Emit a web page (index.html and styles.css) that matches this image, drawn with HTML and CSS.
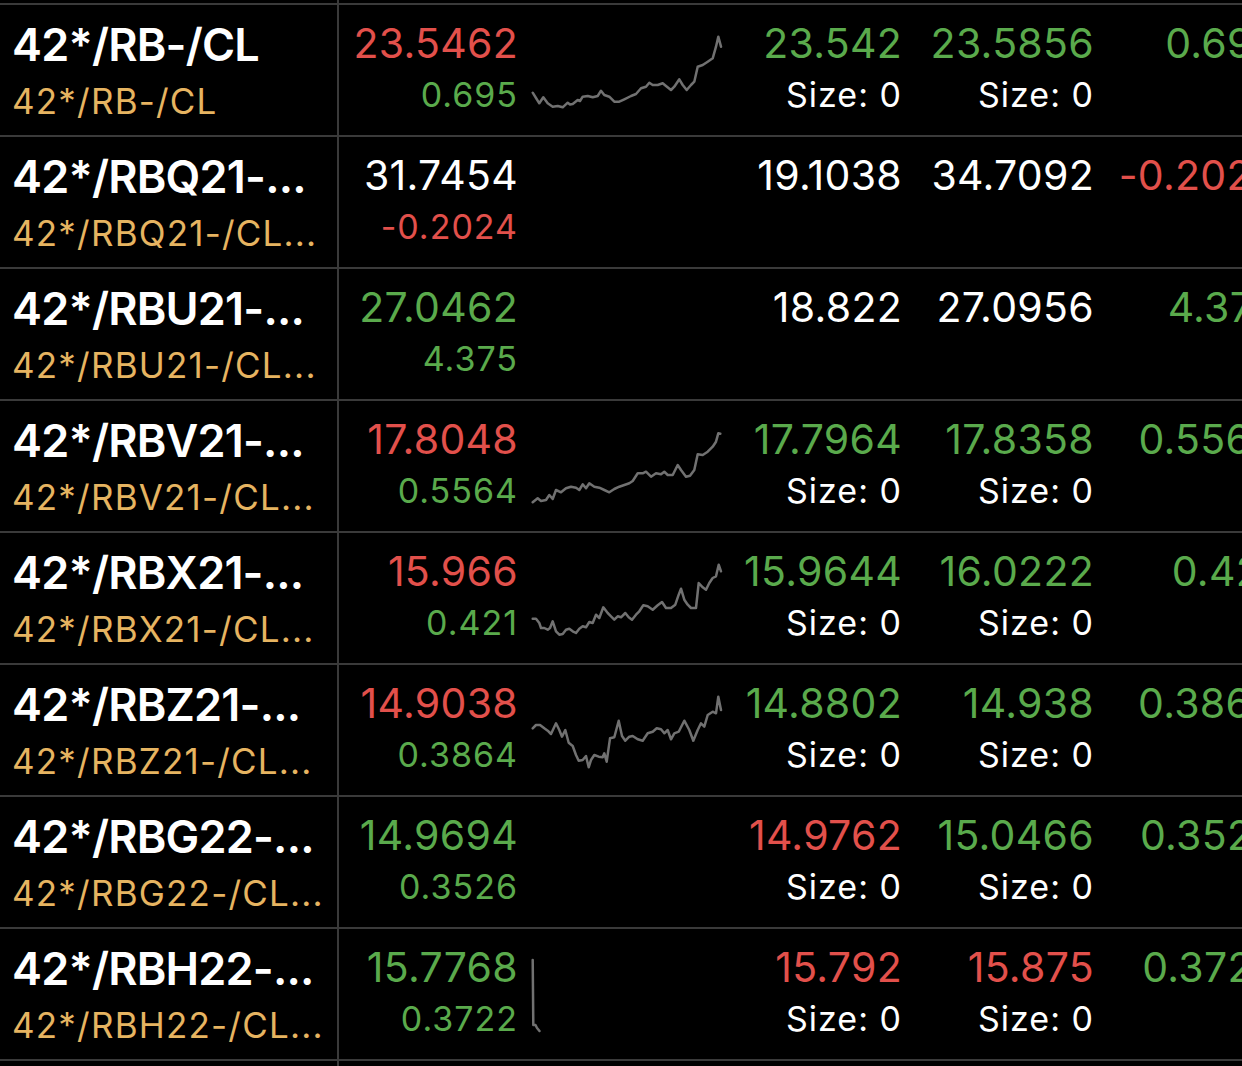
FILE: index.html
```html
<!DOCTYPE html>
<html>
<head>
<meta charset="utf-8">
<link rel="stylesheet" href="styles.css">
</head>
<body>
<div class="list">
  <div class="row partial"><div class="name"></div></div>

  <div class="row">
    <div class="name"><div class="sym">42*/RB-/CL</div><div class="desc">42*/RB-/CL</div></div>
    <div class="cell"><div class="big r">23.5462</div><div class="small g">0.695</div></div>
    <div class="spark"><svg viewBox="5 -15 192 130"><polyline points="6.7,72.7 10,78 13.3,83.3 17.3,77.3 21.7,83.3 26.7,86.7 31.7,86 36.7,87.3 41.7,82.7 44,84.5 46.7,84 51.7,80 54,81 56.7,76.7 61.7,76 66.7,77.3 71.7,76 75,70.7 78.3,75 83.3,76.7 88.3,81.7 93.3,81.7 98.3,79.3 105,76 110,74 115,68.3 120,66.7 123.3,62.7 126.7,65 131.7,65 136.7,63.3 140,66 145,70 148.3,66.7 153.3,59.3 156.7,65 160.7,70 165,65 168.3,61.7 171.7,46.7 176.7,45 181.7,41.7 186.7,38.3 190,26.7 192.3,16.7 195,26.7"/></svg></div>
    <div class="cell"><div class="big g">23.542</div><div class="small w">Size: 0</div></div>
    <div class="cell"><div class="big g">23.5856</div><div class="small w">Size: 0</div></div>
    <div class="cell last"><div class="big g">0.695</div></div>
  </div>

  <div class="row">
    <div class="name"><div class="sym">42*/RBQ21-...</div><div class="desc">42*/RBQ21-/CL...</div></div>
    <div class="cell"><div class="big w">31.7454</div><div class="small r">-0.2024</div></div>
    <div class="spark"></div>
    <div class="cell"><div class="big w">19.1038</div></div>
    <div class="cell"><div class="big w">34.7092</div></div>
    <div class="cell last"><div class="big r">-0.2024</div></div>
  </div>

  <div class="row">
    <div class="name"><div class="sym">42*/RBU21-...</div><div class="desc">42*/RBU21-/CL...</div></div>
    <div class="cell"><div class="big g">27.0462</div><div class="small g">4.375</div></div>
    <div class="spark"></div>
    <div class="cell"><div class="big w">18.822</div></div>
    <div class="cell"><div class="big w">27.0956</div></div>
    <div class="cell last"><div class="big g">4.375</div></div>
  </div>

  <div class="row">
    <div class="name"><div class="sym">42*/RBV21-...</div><div class="desc">42*/RBV21-/CL...</div></div>
    <div class="cell"><div class="big r">17.8048</div><div class="small g">0.5564</div></div>
    <div class="spark"><svg viewBox="5 -14 192 130"><polyline points="6.7,87.3 11.7,83.3 15,86 20,85 23.3,80 26.7,84 30,75 35,77.3 40,73.3 45,71.7 50,72.7 53.3,75 56.7,69.3 60,73.3 63.3,68.3 68.3,71.7 73.3,72.7 78.3,75 83.3,77.3 88.3,74 93.3,71.7 98.3,70 103.3,68.3 106.7,66 111.7,58.3 116.7,58.3 120,56.7 125,61.7 130,58.3 135,59.3 138.3,56.7 141.7,60 146.7,60 151.7,50 155,55 160,61.7 164,60.7 168.3,55 171.7,39.3 176.7,40 181.7,36.7 186.7,31.7 190,26.7 192.3,18.3 194.3,18.7"/></svg></div>
    <div class="cell"><div class="big g">17.7964</div><div class="small w">Size: 0</div></div>
    <div class="cell"><div class="big g">17.8358</div><div class="small w">Size: 0</div></div>
    <div class="cell last"><div class="big g">0.5564</div></div>
  </div>

  <div class="row">
    <div class="name"><div class="sym">42*/RBX21-...</div><div class="desc">42*/RBX21-/CL...</div></div>
    <div class="cell"><div class="big r">15.966</div><div class="small g">0.421</div></div>
    <div class="spark"><svg viewBox="5 -15 192 130"><polyline points="6.7,70.7 10,70.7 13.3,75 15,80 18.3,80 21.7,81.7 24,80 26.7,73.3 30,83.3 33.3,86.7 36.7,86 40,81.7 43.3,80.7 46.7,83.3 50,85 53.3,80.7 56.7,78.3 60,79.3 63.3,74 66.7,75 70,66.7 73.3,70 77.3,59.3 81.7,65 85,68.3 88.3,71.7 91.7,68.3 95,69.3 99.3,65 102.7,69.3 106,71.7 110,66.7 113.3,63.3 117.3,57.3 121.7,58.3 126.7,61.7 131.7,57.3 136,54 140,60 145,60 149.3,56.7 152.7,46.7 155,40.7 158.3,51.7 161.7,56.7 165,60 170,60 172.7,35 176.7,39.3 180,41.7 183.3,35 186.7,30 190,28.3 192.7,16.7 195,23.3"/></svg></div>
    <div class="cell"><div class="big g">15.9644</div><div class="small w">Size: 0</div></div>
    <div class="cell"><div class="big g">16.0222</div><div class="small w">Size: 0</div></div>
    <div class="cell last"><div class="big g">0.421</div></div>
  </div>

  <div class="row">
    <div class="name"><div class="sym">42*/RBZ21-...</div><div class="desc">42*/RBZ21-/CL...</div></div>
    <div class="cell"><div class="big r">14.9038</div><div class="small g">0.3864</div></div>
    <div class="spark"><svg viewBox="5 -15 192 130"><polyline points="6.7,48.3 10,45 14,45 18.3,48.3 21.7,50.7 25,54 30,43.3 33.3,50 36,56.7 39.3,50 42.7,62.7 46.7,66 50,75 52.7,80.7 56.7,80 60,76 62.7,87.3 65,80 68.3,75 72.7,76.7 76.7,77.3 78.3,73.3 80.7,81.7 84,58.3 88.3,57.3 92.7,40.7 96,56 99.3,60.7 103.3,56.7 106.7,56 111.7,59.3 116.7,60.7 121.7,53.3 126.7,51.7 130.7,48.3 135,49.3 138.3,53.3 141.7,50 145,59.3 148.3,53.3 152.7,51.7 158.3,40.7 163.3,50 167.3,60.7 171.7,50 175,43.3 178.3,46.7 181.7,35 186.7,31.7 190,33.3 192.3,16.7 195,30"/></svg></div>
    <div class="cell"><div class="big g">14.8802</div><div class="small w">Size: 0</div></div>
    <div class="cell"><div class="big g">14.938</div><div class="small w">Size: 0</div></div>
    <div class="cell last"><div class="big g">0.3864</div></div>
  </div>

  <div class="row">
    <div class="name"><div class="sym">42*/RBG22-...</div><div class="desc">42*/RBG22-/CL...</div></div>
    <div class="cell"><div class="big g">14.9694</div><div class="small g">0.3526</div></div>
    <div class="spark"></div>
    <div class="cell"><div class="big r">14.9762</div><div class="small w">Size: 0</div></div>
    <div class="cell"><div class="big g">15.0466</div><div class="small w">Size: 0</div></div>
    <div class="cell last"><div class="big g">0.3526</div></div>
  </div>

  <div class="row">
    <div class="name"><div class="sym">42*/RBH22-...</div><div class="desc">42*/RBH22-/CL...</div></div>
    <div class="cell"><div class="big g">15.7768</div><div class="small g">0.3722</div></div>
    <div class="spark"><svg viewBox="5 -16 192 130"><polyline points="6.7,15 7.3,80 9.5,80 11,83 13.5,86"/></svg></div>
    <div class="cell"><div class="big r">15.792</div><div class="small w">Size: 0</div></div>
    <div class="cell"><div class="big r">15.875</div><div class="small w">Size: 0</div></div>
    <div class="cell last"><div class="big g">0.3722</div></div>
  </div>

  <div class="row">
    <div class="name"></div>
  </div>
</div>
</body>
</html>
```
FILE: styles.css
```css
html, body {
  margin: 0;
  padding: 0;
  background: #000;
}
body {
  width: 1242px;
  height: 1066px;
  overflow: hidden;
  font-family: "Inter", "Noto Sans", sans-serif;
  color: #fff;
}
.list {
  display: flex;
  flex-direction: column;
  width: 1400px;
}
.row {
  display: flex;
  height: 130px;
  border-top: 2px solid #3a3a3a;
  flex-shrink: 0;
}
.row.partial {
  height: 3px;
  border-top: 0;
}
.name {
  width: 325px;
  flex-shrink: 0;
  padding: 12px 0 0 12px;
  border-right: 2px solid #3a3a3a;
  white-space: nowrap;
  overflow: hidden;
}
.sym {
  font-size: 45px;
  font-weight: 600;
  letter-spacing: -0.8px;
  line-height: 56px;
  color: #fff;
}
.desc {
  font-size: 35px;
  letter-spacing: 1.2px;
  line-height: 56px;
  color: #e6b461;
}
.cell {
  width: 179px;
  flex-shrink: 0;
  padding: 13px 13px 0 0;
  text-align: right;
  white-space: nowrap;
}
.cell.last {
  width: 171px;
  padding-right: 21px;
}
.big {
  font-size: 41px;
  line-height: 50px;
  letter-spacing: 0.3px;
}
.small {
  font-size: 34px;
  letter-spacing: 1px;
  line-height: 54px;
}
.spark {
  width: 192px;
  flex-shrink: 0;
}
.spark svg {
  display: block;
  width: 192px;
  height: 130px;
}
.spark polyline {
  fill: none;
  stroke: #717171;
  stroke-width: 2.5;
  stroke-linejoin: round;
  stroke-linecap: round;
}
.g { color: #5aaa4c; }
.r { color: #e2504b; }
.w { color: #fff; }
```
